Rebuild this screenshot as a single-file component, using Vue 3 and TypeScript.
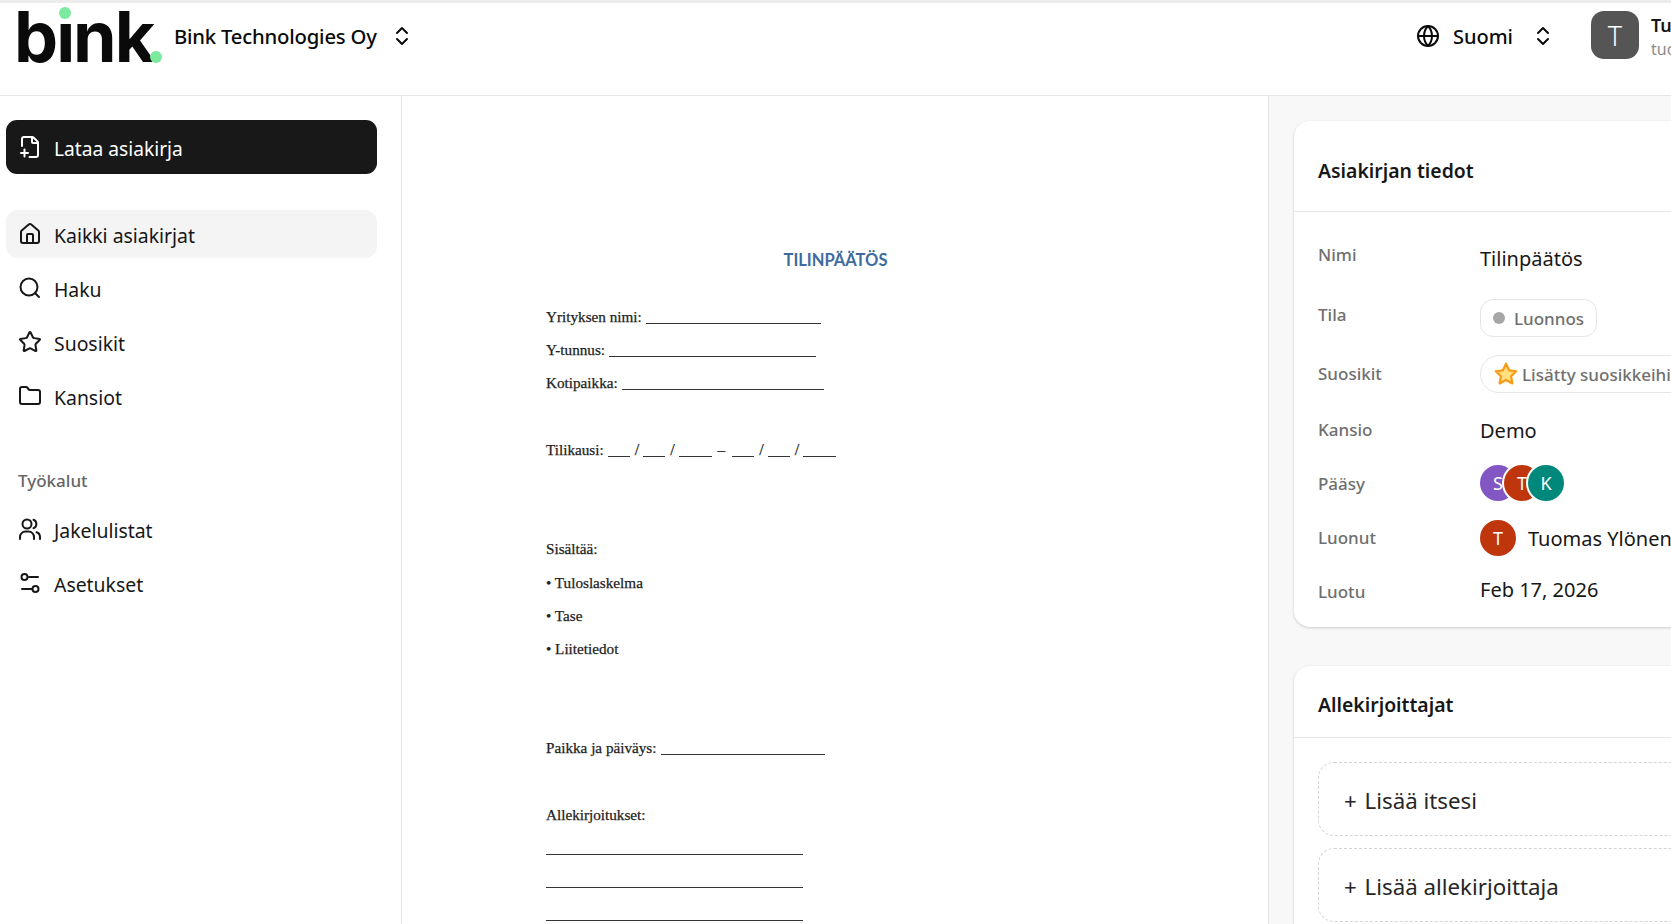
<script setup lang="ts">
interface DocLine { label: string; blanks: number[]; cls?: string }
const lines: DocLine[] = [
  { label: 'Yrityksen nimi:', blanks: [175] },
  { label: 'Y-tunnus:', blanks: [207] },
  { label: 'Kotipaikka:', blanks: [202] },
  { label: '', blanks: [] },
  { label: 'Tilikausi:', blanks: [] , cls: 'period' },
  { label: '', blanks: [] },
  { label: '', blanks: [] },
  { label: 'Sisältää:', blanks: [] },
  { label: '• Tuloslaskelma', blanks: [] },
  { label: '• Tase', blanks: [] },
  { label: '• Liitetiedot', blanks: [] },
  { label: '', blanks: [] },
  { label: '', blanks: [] },
  { label: 'Paikka ja päiväys:', blanks: [164] },
  { label: '', blanks: [] },
  { label: 'Allekirjoitukset:', blanks: [] },
  { label: '', blanks: [257] },
  { label: '', blanks: [257] },
  { label: '', blanks: [257] },
]
const periodBlanks = [22, 22, 33]
</script>

<template>
  <div class="app">
    <header class="top">
      <div class="logo">
        <span class="logo-text">bink</span>
        <i class="dot dot-i"></i>
        <i class="dot dot-end"></i>
      </div>
      <div class="org">
        <span>Bink Technologies Oy</span>
        <svg class="ic chev" viewBox="0 0 24 24"><path d="m7 15 5 5 5-5" /><path d="m7 9 5-5 5 5" /></svg>
      </div>
      <div class="lang">
        <svg class="ic globe" viewBox="0 0 24 24"><circle cx="12" cy="12" r="10" /><path d="M12 2a14.5 14.5 0 0 0 0 20 14.5 14.5 0 0 0 0-20" /><path d="M2 12h20" /></svg>
        <span>Suomi</span>
        <svg class="ic chev" viewBox="0 0 24 24"><path d="m7 15 5 5 5-5" /><path d="m7 9 5-5 5 5" /></svg>
      </div>
      <div class="user">
        <div class="user-av">T</div>
        <div class="user-text">
          <div class="user-name">Tuomas Ylönen</div>
          <div class="user-mail">tuomas@bink.fi</div>
        </div>
      </div>
    </header>

    <div class="body">
      <aside class="side">
        <button class="upload">
          <svg class="ic" viewBox="0 0 24 24"><path d="M4 11V4a2 2 0 0 1 2-2h8a2.4 2.4 0 0 1 1.7.7l3.6 3.6A2.4 2.4 0 0 1 20 8v12a2 2 0 0 1-2 2h-6.5" /><path d="M14 2v5a1 1 0 0 0 1 1h5" /><path d="M3 18h7" /><path d="M6.500 14.500v7" /></svg>
          <span>Lataa asiakirja</span>
        </button>
        <nav class="nav">
          <a class="item active">
            <svg class="ic" viewBox="0 0 24 24"><path d="M15 21v-8a1 1 0 0 0-1-1h-4a1 1 0 0 0-1 1v8" /><path d="M3 10a2 2 0 0 1 .709-1.528l7-6a2 2 0 0 1 2.582 0l7 6A2 2 0 0 1 21 10v9a2 2 0 0 1-2 2H5a2 2 0 0 1-2-2z" /></svg>
            <span>Kaikki asiakirjat</span>
          </a>
          <a class="item">
            <svg class="ic" viewBox="0 0 24 24"><circle cx="11" cy="11" r="8.500" /><path d="m21 21-3.800-3.800" /></svg>
            <span>Haku</span>
          </a>
          <a class="item">
            <svg class="ic" viewBox="0 0 24 24"><path d="M11.525 2.295a.53.53 0 0 1 .95 0l2.310 4.679a2.123 2.123 0 0 0 1.595 1.160l5.166.756a.53.53 0 0 1 .294.904l-3.736 3.638a2.123 2.123 0 0 0-.611 1.878l.882 5.140a.53.53 0 0 1-.771.560l-4.618-2.428a2.122 2.122 0 0 0-1.973 0L6.396 21.010a.53.53 0 0 1-.77-.560l.881-5.139a2.122 2.122 0 0 0-.611-1.879L2.160 9.795a.53.53 0 0 1 .294-.906l5.165-.755a2.122 2.122 0 0 0 1.597-1.160z" /></svg>
            <span>Suosikit</span>
          </a>
          <a class="item">
            <svg class="ic" viewBox="0 0 24 24"><path d="M20 20a2 2 0 0 0 2-2V8a2 2 0 0 0-2-2h-7.900a2 2 0 0 1-1.690-.900L9.600 3.900A2 2 0 0 0 7.930 3H4a2 2 0 0 0-2 2v13a2 2 0 0 0 2 2Z" /></svg>
            <span>Kansiot</span>
          </a>
        </nav>
        <div class="section">Työkalut</div>
        <nav class="nav">
          <a class="item">
            <svg class="ic" viewBox="0 0 24 24"><path d="M2 22v-2a5.500 5.500 0 0 1 5.500-5.500h3A5.500 5.500 0 0 1 16 20v2" /><circle cx="9" cy="7" r="4.500" /><path d="M22 22v-2a5 5 0 0 0-3.500-4.800" /><path d="M15.500 2.800a4.500 4.500 0 0 1 0 8.400" /></svg>
            <span>Jakelulistat</span>
          </a>
          <a class="item">
            <svg class="ic" viewBox="0 0 24 24"><path d="M20 6h-9" /><path d="M14 18H4" /><circle cx="6.500" cy="6" r="3" /><circle cx="17.500" cy="18" r="3" /></svg>
            <span>Asetukset</span>
          </a>
        </nav>
      </aside>

      <main class="doc">
        <h1 class="doc-title">TILINPÄÄTÖS</h1>
        <div class="doc-lines">
          <div v-for="(l, i) in lines" :key="i" class="doc-line">
            <span v-if="l.label">{{ l.label }}</span>
            <template v-if="l.cls === 'period'">
              <template v-for="(w, j) in periodBlanks" :key="j">
                <i class="blank" :style="{ width: w + 'px' }"></i><span v-if="j < 2" class="sl">/</span>
              </template>
              <span class="dash">–</span>
              <template v-for="(w, j) in periodBlanks" :key="'b' + j">
                <i class="blank" :style="{ width: w + 'px' }"></i><span v-if="j < 2" class="sl">/</span>
              </template>
            </template>
            <i v-for="(w, j) in l.blanks" :key="j" class="blank" :style="{ width: w + 'px' }"></i>
          </div>
        </div>
      </main>

      <section class="panel">
        <div class="card card-info">
          <h2 class="card-head">Asiakirjan tiedot</h2>
          <dl class="rows">
            <div class="row r-name"><dt>Nimi</dt><dd class="val">Tilinpäätös</dd></div>
            <div class="row r-state"><dt>Tila</dt><dd><span class="chip"><i class="state-dot"></i>Luonnos</span></dd></div>
            <div class="row r-fav"><dt>Suosikit</dt><dd><span class="chip chip-fav">
              <svg class="star" viewBox="0 0 24 24"><path d="M12 2.500l2.900 6.100 6.600.9-4.800 4.600 1.200 6.600-5.900-3.200-5.900 3.200 1.200-6.600L2.500 9.500l6.600-.9z" /></svg>Lisätty suosikkeihin</span></dd></div>
            <div class="row r-folder"><dt>Kansio</dt><dd class="val">Demo</dd></div>
            <div class="row r-access"><dt>Pääsy</dt><dd class="stack">
              <span class="av purple">S</span><span class="av rust ring">T</span><span class="av teal ring">K</span>
            </dd></div>
            <div class="row r-by"><dt>Luonut</dt><dd class="creator"><span class="av rust">T</span><span class="val">Tuomas Ylönen</span></dd></div>
            <div class="row r-date"><dt>Luotu</dt><dd class="val">Feb 17, 2026</dd></div>
          </dl>
        </div>
        <div class="card card-sign">
          <h2 class="card-head head-sign">Allekirjoittajat</h2>
          <div class="adds">
            <button class="add"><span class="plus">+</span> Lisää itsesi</button>
            <button class="add"><span class="plus">+</span> Lisää allekirjoittaja</button>
          </div>
        </div>
      </section>
    </div>
  </div>
</template>

<style>
html, body { margin: 0; height: 100%; overflow: hidden; background: #fff; }
</style>

<style scoped>
.app {
  width: 1671px;
  height: 924px;
  overflow: hidden;
  display: flex;
  flex-direction: column;
  font-family: "Noto Sans", "Open Sans", sans-serif;
  color: #171717;
  border-top: 3px solid #ececec;
  box-sizing: border-box;
}
.ic {
  width: 24px;
  height: 24px;
  flex: none;
  fill: none;
  stroke: currentColor;
  stroke-width: 2;
  stroke-linecap: round;
  stroke-linejoin: round;
}
.top {
  height: 93px;
  flex: none;
  box-sizing: border-box;
  border-bottom: 1px solid #e6e6e6;
  display: flex;
  align-items: flex-start;
  padding-left: 16px;
  overflow: hidden;
}
.logo {
  position: relative;
  width: 150px;
  height: 70px;
  flex: none;
}
.logo-text {
  position: absolute;
  left: -2px;
  top: 0;
  font-family: Inter, sans-serif;
  font-weight: 700;
  font-size: 70px;
  line-height: 68px;
  letter-spacing: -2px;
  color: #0a0a0a;
}
.dot {
  position: absolute;
  width: 12px;
  height: 12px;
  border-radius: 50%;
  background: #7bea9f;
}
.dot-i { left: 43px; top: 4px; box-shadow: 0 0 0 3px #fff; }
.dot-end { left: 134px; top: 48px; }
.org {
  margin-left: 8px;
  height: 66px;
  display: flex;
  align-items: center;
  gap: 13px;
  font-size: 20.300px;
  font-weight: 500;
  letter-spacing: -0.200px;
  color: #0a0a0a;
}
.lang {
  margin-left: auto;
  height: 66px;
  display: flex;
  align-items: center;
  font-size: 20px;
  font-weight: 500;
  color: #0a0a0a;
}
.globe { margin-right: 13px; }
.lang .chev { margin-left: 18px; }
.user {
  margin-left: 36px;
  width: 80px;
  flex: none;
  display: flex;
  gap: 12px;
  padding-top: 8px;
}
.user-av {
  width: 48px;
  height: 48px;
  flex: none;
  border-radius: 13px;
  background: #555;
  color: #fff;
  font-size: 27px;
  font-weight: 300;
  display: flex;
  align-items: center;
  justify-content: center;
}
.user-text { white-space: nowrap; }
.user-name { font-size: 18px; font-weight: 600; line-height: 26px; margin-top: 1px; }
.user-mail { font-size: 16px; line-height: 22px; color: #8a8a8a; }

.body { flex: 1; display: flex; min-height: 0; }
.side {
  width: 402px;
  flex: none;
  box-sizing: border-box;
  border-right: 1px solid #e6e6e6;
  padding: 24px 24px 0 6px;
}
.upload {
  width: 100%;
  height: 54px;
  border: 0;
  border-radius: 11px;
  background: #181818;
  color: #fff;
  font: inherit;
  font-size: 19.200px;
  display: flex;
  align-items: center;
  gap: 12px;
  padding: 0 0 0 12px;
}
.upload span, .item span { padding-top: 2px; }
.nav { display: flex; flex-direction: column; gap: 6px; }
.upload + .nav { margin-top: 36px; }
.item {
  height: 48px;
  display: flex;
  align-items: center;
  gap: 12px;
  padding-left: 12px;
  border-radius: 12px;
  font-size: 19.400px;
  color: #171717;
}
.item.active { background: #f4f4f4; }
.section {
  margin: 49px 0 12px 12px;
  font-size: 17px;
  line-height: 24px;
  font-weight: 500;
  color: #666;
}

.doc {
  width: 866px;
  flex: none;
  box-sizing: border-box;
  padding-left: 144px;
  background: #fff;
  font-family: "Liberation Serif", serif;
}
.doc-title {
  margin: 0;
  padding-top: 153px;
  width: 579px;
  text-align: center;
  font-family: Lato, sans-serif;
  font-size: 16.500px;
  line-height: 22px;
  font-weight: 700;
  color: #3f6b9f;
}
.doc-lines { margin-top: 29px; }
.doc-line {
  height: 33.200px;
  line-height: 33.200px;
  font-size: 15.200px;
  color: #222;
  white-space: nowrap;
  -webkit-text-stroke: 0.25px #222;
}
.blank {
  display: inline-block;
  height: 1px;
  background: #333;
  margin-left: 4px;
  vertical-align: -2px;
}
.blank:first-child { margin-left: 0; }
.sl { margin: 0 0 0 5px; font-size: 16px; }
.dash { margin-left: 6px; margin-right: 3px; }

.panel {
  flex: 1;
  box-sizing: border-box;
  background: #f8f8f8;
  border-left: 1px solid #e6e6e6;
  padding: 25px 0 0 25px;
  min-width: 0;
  overflow: hidden;
}
.card {
  width: 500px;
  background: #fff;
  border-radius: 16px;
  box-shadow: 0 1px 3px rgba(0, 0, 0, 0.18);
}
.card-info { height: 506px; }
.card-sign { margin-top: 39px; height: 320px; }
.card-head {
  margin: 0;
  height: 91px;
  box-sizing: border-box;
  padding: 8px 0 0 24px;
  display: flex;
  align-items: center;
  font-size: 19.400px;
  font-weight: 600;
  border-bottom: 1px solid #e6e6e6;
  color: #171717;
}
.head-sign { height: 72px; padding-top: 6px; }
.rows { margin: 0; padding: 0 0 0 24px; }
.row { display: flex; align-items: center; }
.row dt {
  width: 162px;
  flex: none;
  font-size: 17px;
  font-weight: 500;
  color: #6f6f6f;
}
.row dd { margin: 0; display: flex; align-items: center; white-space: nowrap; }
.val { font-size: 20px; color: #171717; }
.r-name { height: 60px; margin-top: 16px; }
.r-name dt { margin-top: -7px; }
.r-state { height: 60px; }
.r-state dt { margin-top: -8px; }
.r-fav { height: 56px; }
.r-fav dt { margin-top: -5px; }
.r-fav dd { margin-top: -4px; }
.r-folder { height: 51px; }
.r-folder dd { margin-top: 2px; }
.r-access { height: 56px; }
.r-by { height: 52px; }
.r-by dd { margin-top: 2px; }
.r-date { height: 54px; }
.r-date dt { margin-top: 3px; }
.r-date dd { margin-top: -2px; }
.chip {
  height: 38px;
  box-sizing: border-box;
  display: inline-flex;
  align-items: center;
  padding: 0 12px;
  border: 1px solid #e6e6e6;
  border-radius: 13px;
  font-size: 17px;
  font-weight: 500;
  color: #6f6f6f;
}
.chip-fav { border-radius: 19px; padding-left: 12px; }
.state-dot {
  width: 12px;
  height: 12px;
  border-radius: 50%;
  background: #a6a6a6;
  margin-right: 9px;
}
.star {
  width: 26px;
  height: 26px;
  margin-right: 3px;
  fill: #ffdf80;
  stroke: #f99a15;
  stroke-width: 2;
  stroke-linejoin: round;
}
.av {
  width: 36px;
  height: 36px;
  flex: none;
  box-sizing: border-box;
  border-radius: 50%;
  color: #fff;
  font-size: 18px;
  display: inline-flex;
  align-items: center;
  justify-content: center;
}
.av.ring { box-shadow: 0 0 0 2px #fff; margin-left: -12px; }
.purple { background: #8257c4; }
.rust { background: #bf360c; }
.teal { background: #00897b; }
.creator { gap: 12px; }
.adds { padding: 24px 0 0 24px; display: flex; flex-direction: column; gap: 12px; }
.add {
  width: 440px;
  height: 74px;
  box-sizing: border-box;
  border: 1px dashed #d4d4d4;
  border-radius: 16px;
  background: #fff;
  font: inherit;
  font-size: 22.300px;
  color: #262626;
  text-align: left;
  padding: 2px 0 0 25px;
}
.plus { margin-right: 2px; }
</style>
